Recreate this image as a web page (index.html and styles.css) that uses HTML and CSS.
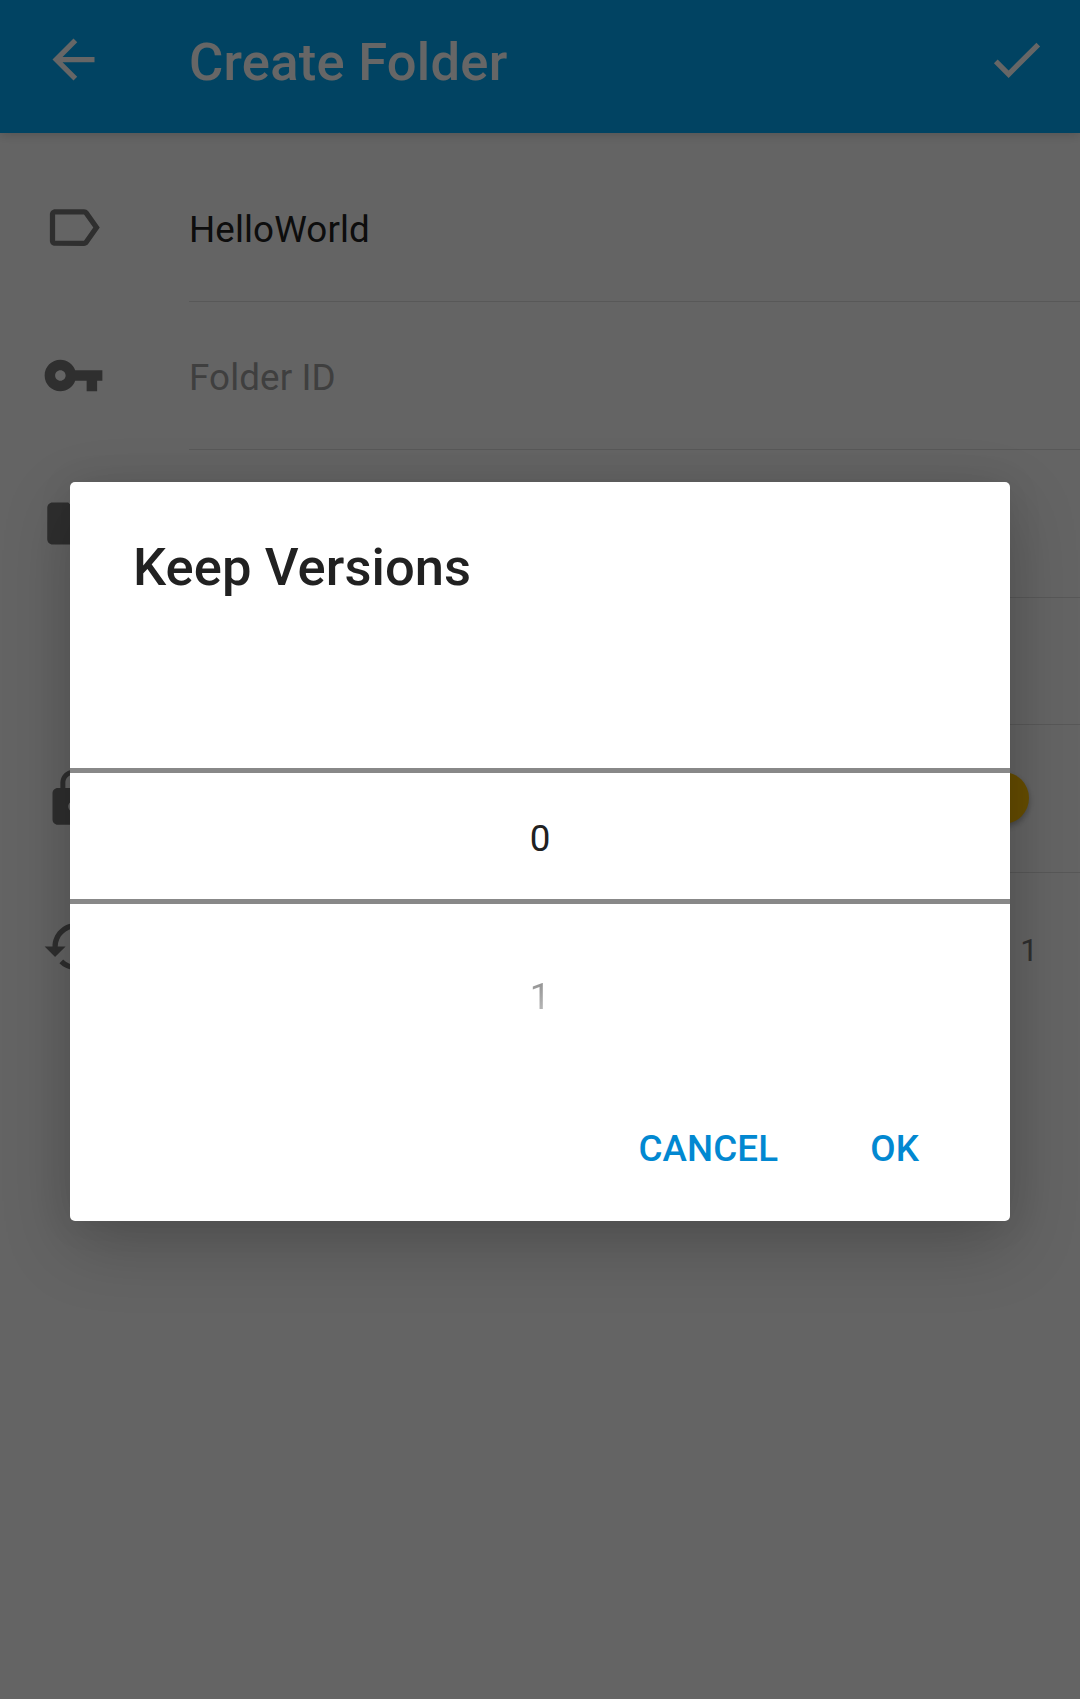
FILE: index.html
```html
<!DOCTYPE html>
<html lang="en">
<head>
<meta charset="utf-8">
<title>Create Folder</title>
<link rel="stylesheet" href="styles.css">
</head>
<body>
<div class="screen">
  <header class="toolbar">
    <svg class="icon" viewBox="0 0 24 24"><path d="M20 11H7.83l5.59-5.59L12 4l-8 8 8 8 1.41-1.41L7.83 13H20v-2z"/></svg>
    <h1 class="toolbar-title">Create Folder</h1>
    <svg class="icon" viewBox="0 0 24 24"><path d="M9 16.17L4.83 12l-1.42 1.41L9 19 21 7l-1.41-1.41z"/></svg>
  </header>
  <main class="form">
    <div class="row">
      <svg class="icon" viewBox="0 0 24 24"><path d="M17.63 5.84C17.27 5.33 16.67 5 16 5L5 5.01C3.9 5.01 3 5.9 3 7v10c0 1.1.9 1.99 2 1.99L16 19c.67 0 1.27-.33 1.63-.84L22 12l-4.37-6.16zM16 17H5V7h11l3.55 5L16 17z"/></svg>
      <div class="field">HelloWorld</div>
    </div>
    <div class="row">
      <svg class="icon" viewBox="0 0 24 24"><path d="M12.65 10C11.83 7.67 9.61 6 7 6c-3.31 0-6 2.69-6 6s2.69 6 6 6c2.61 0 4.83-1.67 5.65-4H17v4h4v-4h2v-4H12.65zM7 14c-1.1 0-2-.9-2-2s.9-2 2-2 2 .9 2 2-.9 2-2 2z"/></svg>
      <div class="field hint">Folder ID</div>
    </div>
    <div class="row">
      <svg class="icon" viewBox="0 0 24 24"><path d="M10 4H4c-1.1 0-1.99.9-1.99 2L2 18c0 1.1.9 2 2 2h16c1.1 0 2-.9 2-2V8c0-1.1-.9-2-2-2h-8l-2-2z"/></svg>
      <div class="field"></div>
    </div>
    <div class="row row-short">
      <div class="field"></div>
    </div>
    <div class="row">
      <svg class="icon" viewBox="0 0 24 24"><path d="M18 8h-1V6c0-2.76-2.24-5-5-5S7 3.24 7 6v2H6c-1.1 0-2 .9-2 2v10c0 1.1.9 2 2 2h12c1.1 0 2-.9 2-2V10c0-1.1-.9-2-2-2zm-6 9c-1.1 0-2-.9-2-2s.9-2 2-2 2 .9 2 2-.9 2-2 2zm3.1-9H8.9V6c0-1.71 1.39-3.1 3.1-3.1 1.71 0 3.1 1.39 3.1 3.1v2z"/></svg>
      <div class="field field-switch"><span class="thumb"></span></div>
    </div>
    <div class="row row-last">
      <svg class="icon" viewBox="0 0 24 24"><path d="M13 3c-4.97 0-9 4.03-9 9H1l3.89 3.89.07.14L9 12H6c0-3.87 3.13-7 7-7s7 3.13 7 7-3.13 7-7 7c-1.93 0-3.68-.79-4.94-2.06l-1.42 1.42C8.27 19.99 10.51 21 13 21c4.97 0 9-4.03 9-9s-4.03-9-9-9z"/></svg>
      <div class="field field-count">1</div>
    </div>
  </main>
  <div class="scrim">
    <section class="dialog">
      <h2 class="dialog-title">Keep Versions</h2>
      <div class="picker">
        <div class="picker-current">0</div>
        <div class="picker-next">1</div>
      </div>
      <div class="actions">
        <span class="action">CANCEL</span>
        <span class="action">OK</span>
      </div>
    </section>
  </div>
</div>
</body>
</html>
```
FILE: styles.css
```css
* {
  box-sizing: border-box;
}

body {
  margin: 0;
  font-family: Roboto, "Liberation Sans", sans-serif;
}

.screen {
  position: relative;
  width: 1080px;
  height: 1699px;
  overflow: hidden;
  background: #fafafa;
  color: #212121;
}

.icon {
  flex: none;
  display: block;
  width: 63px;
  height: 63px;
  fill: #757575;
}

.toolbar {
  position: relative;
  display: flex;
  align-items: center;
  height: 133px;
  padding: 0 32px 14px 42px;
  background: #03a9f4;
  box-shadow: 0 2px 10px rgba(0, 0, 0, .16);
}

.toolbar .icon {
  fill: #fff;
}

.toolbar-title {
  flex: 1;
  margin: 0 0 0 84px;
  padding-top: 5px;
  font-size: 52.5px;
  line-height: 62px;
  font-weight: 500;
  letter-spacing: .25px;
  color: #fff;
}

.form {
  padding-top: 21px;
}

.row {
  display: flex;
  align-items: center;
  height: 148px;
  padding-left: 42px;
}

.row .icon {
  margin: 0 84px 2px 0;
}

.row-short {
  height: 127px;
  padding-left: 189px;
}

.field {
  flex: 1;
  display: flex;
  align-items: center;
  height: 100%;
  padding-top: 3px;
  border-bottom: 1px solid #dcdcdc;
  font-size: 36.75px;
  letter-spacing: .12px;
}

.hint {
  color: #9e9e9e;
}

.field-switch {
  justify-content: flex-end;
  padding: 0 51px 0 0;
}

.thumb {
  width: 52px;
  height: 52px;
  margin-bottom: 1px;
  border-radius: 50%;
  background: #ffc107;
  box-shadow: 0 3px 6px rgba(0, 0, 0, .3);
}

.field-count {
  justify-content: flex-end;
  padding: 6px 42px 0 0;
  font-size: 31.5px;
  color: #757575;
}

.row-last .field {
  border-bottom: 0;
}

.scrim {
  position: absolute;
  inset: 0;
  padding: 482px 70px 0;
  background: rgba(0, 0, 0, .6);
}

.dialog {
  height: 739px;
  border-radius: 5px;
  background: #fff;
  box-shadow: 0 24px 70px rgba(0, 0, 0, .2), 0 2px 36px rgba(0, 0, 0, .08);
}

.dialog-title {
  margin: 0;
  padding: 54px 63px 0;
  height: 286px;
  font-size: 52.5px;
  line-height: 62px;
  font-weight: 500;
  letter-spacing: .08px;
}

.picker {
  font-size: 36.75px;
  text-align: center;
}

.picker-current {
  height: 136px;
  border: solid #888;
  border-width: 5px 0;
  line-height: 132px;
}

.picker-next {
  height: 184px;
  line-height: 186px;
  background: linear-gradient(#939393 42%, #bcbcbc 60%);
  background-clip: text;
  color: transparent;
}

.actions {
  display: flex;
  justify-content: flex-end;
  gap: 92px;
  padding: 37px 91px 0;
  font-size: 36.75px;
  line-height: 48px;
  font-weight: 500;
  letter-spacing: .12px;
  color: #0288d1;
}
```
